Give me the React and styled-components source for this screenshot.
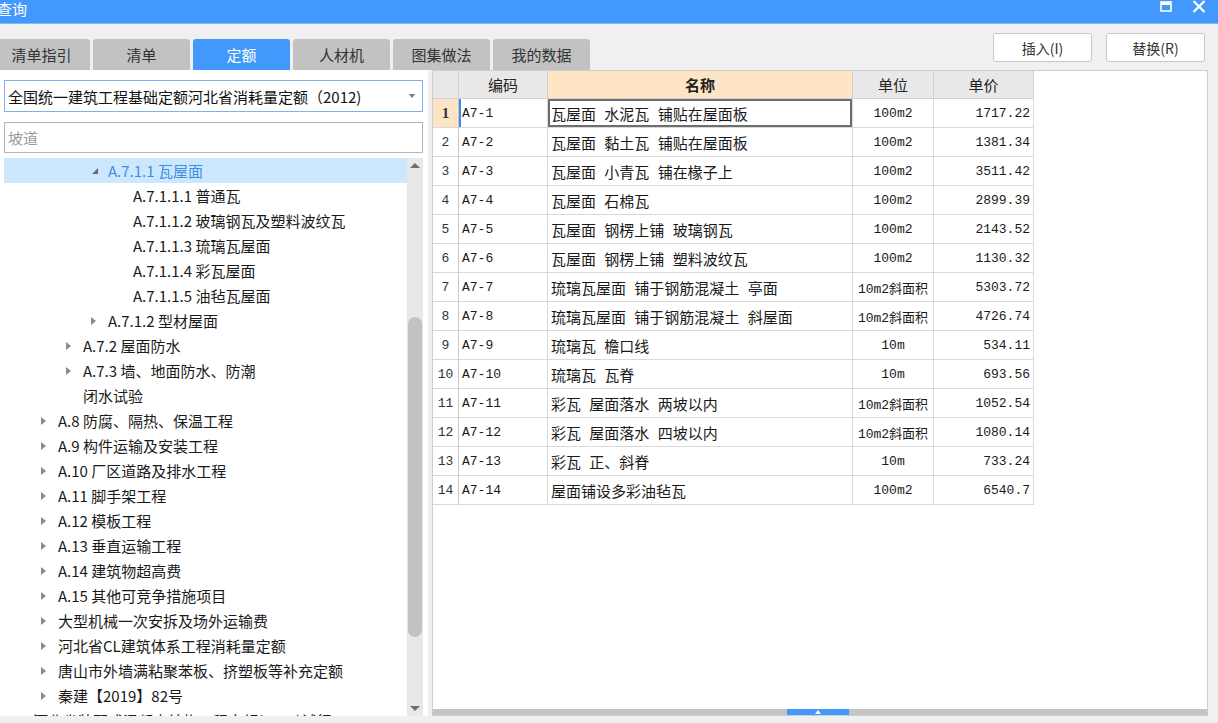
import React from "react";
import styled, { createGlobalStyle } from "styled-components";

const GlobalStyle = createGlobalStyle`
  html, body { margin: 0; padding: 0; background: #f0f0f0; }
  body { font-family: "Noto Sans CJK SC", "Noto Sans", sans-serif; }
  * { box-sizing: border-box; }
`;

const CJK = `"Noto Sans CJK SC", "Noto Sans", sans-serif`;
const MONO = `"Liberation Mono", "Noto Sans CJK SC", monospace`;

const Window = styled.div`
  width: 1218px;
  height: 723px;
  background: #f0f0f0;
  display: flex;
  flex-direction: column;
  overflow: hidden;
`;

const TitleBar = styled.div`
  height: 24px;
  background: #4398fc;
  display: flex;
  align-items: center;
  justify-content: space-between;
  border-bottom: 1px solid #7fb6f5;
`;

const Title = styled.span`
  color: #fff;
  font-size: 15px;
  margin-left: -3px;
  margin-top: -6px;
  font-family: ${CJK};
`;

const WinIcons = styled.div`
  display: flex;
  align-items: center;
  gap: 20px;
  margin-right: 12px;
  margin-top: -10px;
`;

const TopBar = styled.div`
  height: 46px;
  display: flex;
  align-items: flex-end;
  justify-content: space-between;
`;

const Tabs = styled.div`
  display: flex;
  gap: 3px;
  margin-left: -7px;
`;

const Tab = styled.div`
  width: 97px;
  height: 31px;
  border-radius: 3px 3px 0 0;
  background: ${(p) => (p.$active ? "#4398fc" : "#c2c2c2")};
  color: ${(p) => (p.$active ? "#fff" : "#333")};
  font-size: 15px;
  display: flex;
  align-items: center;
  justify-content: center;
`;

const Buttons = styled.div`
  display: flex;
  gap: 14px;
  margin-right: 13px;
  align-self: flex-start;
  margin-top: 9px;
`;

const Button = styled.div`
  width: 99px;
  height: 29px;
  background: #fff;
  border: 1px solid #c8c8c8;
  border-radius: 3px;
  font-size: 14px;
  color: #333;
  display: flex;
  align-items: center;
  justify-content: center;
`;

const Main = styled.div`
  height: 646px;
  display: flex;
  gap: 4px;
  padding-right: 10px;
`;

const LeftPanel = styled.div`
  width: 428px;
  background: #fff;
  display: flex;
  flex-direction: column;
  padding: 10px 5px 0 4px;
`;

const Combo = styled.div`
  height: 32px;
  border: 1px solid #7db2ee;
  display: flex;
  align-items: center;
  justify-content: space-between;
  padding: 0 7px 0 3px;
  font-size: 15px;
  color: #111;
`;

const Caret = styled.span`
  width: 0;
  height: 0;
  border-left: 3.5px solid transparent;
  border-right: 3.5px solid transparent;
  border-top: 4px solid #777;
`;

const Search = styled.div`
  margin-top: 10px;
  height: 31px;
  border: 1px solid #b4b4b4;
  display: flex;
  align-items: center;
  padding-left: 3px;
  font-size: 15px;
  color: #999;
`;

const TreeWrap = styled.div`
  margin-top: 5px;
  flex: 1;
  display: flex;
  overflow: hidden;
`;

const TreeList = styled.div`
  flex: 1;
  overflow: hidden;
`;

const TreeRow = styled.div`
  height: 25px;
  display: flex;
  align-items: center;
  padding-left: ${(p) => 9 + p.$level * 25}px;
  background: ${(p) => (p.$selected ? "#cce8ff" : "transparent")};
  color: ${(p) => (p.$selected ? "#3d8fe3" : "#1a1a1a")};
  font-size: 15px;
  white-space: nowrap;
`;

const Toggle = styled.span`
  width: 20px;
  flex: none;
  display: flex;
  align-items: center;
  padding-left: 3px;
`;

const Collapsed = styled.span`
  width: 0;
  height: 0;
  border-top: 4px solid transparent;
  border-bottom: 4px solid transparent;
  border-left: 5px solid #8a8a8a;
`;

const Expanded = styled.span`
  width: 0;
  height: 0;
  border-left: 6px solid transparent;
  border-bottom: 6px solid #6b6b6b;
  margin-left: 1px;
`;

const VScroll = styled.div`
  width: 16px;
  background: #e8e8e8;
  display: flex;
  flex-direction: column;
  align-items: center;
  justify-content: space-between;
  padding: 5px 0 5px;
  position: relative;
`;

const ArrowUp = styled.span`
  width: 0;
  height: 0;
  border-left: 5px solid transparent;
  border-right: 5px solid transparent;
  border-bottom: 5px solid #6e6e6e;
`;

const ArrowDown = styled.span`
  width: 0;
  height: 0;
  border-left: 5px solid transparent;
  border-right: 5px solid transparent;
  border-top: 5px solid #6e6e6e;
`;

const Thumb = styled.div`
  position: absolute;
  left: 1px;
  right: 1px;
  top: 159px;
  height: 320px;
  background: #c2c2c2;
  border-radius: 7px;
`;

const RightPanel = styled.div`
  flex: 1;
  background: #fff;
  border: 1px solid #cdcdcd;
  display: flex;
  flex-direction: column;
`;

const Grid = styled.div`
  flex: 1;
  overflow: hidden;
`;

const Row = styled.div`
  display: grid;
  grid-template-columns: 26px 89px 305px 81px 100px;
  height: ${(p) => (p.$header ? 28 : 29)}px;
`;

const Cell = styled.div`
  border-right: 1px solid #d9d9d9;
  border-bottom: 1px solid #d9d9d9;
  display: flex;
  align-items: center;
  justify-content: ${(p) => p.$align || "flex-start"};
  padding: 0 3px;
  font-family: ${(p) => (p.$mono ? MONO : CJK)};
  font-size: ${(p) => (p.$mono ? "13px" : "15px")};
  color: #1a1a1a;
  white-space: nowrap;
  overflow: hidden;
  background: #fff;
`;

const HeadCell = styled(Cell)`
  background: ${(p) => (p.$active ? "#fde4c4" : "#e8e8e8")};
  font-weight: ${(p) => (p.$active ? 700 : 400)};
  justify-content: center;
  color: #222;
  border-color: #d0d0d0;
`;

const NumCell = styled(Cell)`
  justify-content: center;
  padding: 0;
  background: ${(p) => (p.$active ? "#fde4c4" : "#fff")};
  font-family: ${(p) => (p.$active ? `"Liberation Serif", serif` : MONO)};
  font-weight: ${(p) => (p.$active ? 700 : 400)};
  font-size: ${(p) => (p.$active ? "15px" : "13px")};
  color: #333;
  border-right-color: #c8c8c8;
`;

const CodeCell = styled(Cell)`
  box-shadow: ${(p) => (p.$cursor ? "inset 2px 0 0 #3a8ee8" : "none")};
`;

const NameCell = styled(Cell)`
  word-spacing: 5px;
  box-shadow: ${(p) => (p.$focus ? "inset 0 0 0 2px #6e6e6e" : "none")};
`;

const HBar = styled.div`
  height: 6px;
  background: #c4c4c4;
  display: flex;
  justify-content: center;
  padding-right: 4px;
`;

const HHandle = styled.div`
  width: 62px;
  height: 6px;
  background: #4398fc;
  display: flex;
  align-items: center;
  justify-content: center;
`;

const HTri = styled.span`
  width: 0;
  height: 0;
  border-left: 3px solid transparent;
  border-right: 3px solid transparent;
  border-bottom: 4px solid #fff;
`;

const tree = [
  { l: 3, t: "A.7.1.1 瓦屋面", s: "open", sel: true },
  { l: 4, t: "A.7.1.1.1 普通瓦" },
  { l: 4, t: "A.7.1.1.2 玻璃钢瓦及塑料波纹瓦" },
  { l: 4, t: "A.7.1.1.3 琉璃瓦屋面" },
  { l: 4, t: "A.7.1.1.4 彩瓦屋面" },
  { l: 4, t: "A.7.1.1.5 油毡瓦屋面" },
  { l: 3, t: "A.7.1.2 型材屋面", s: "closed" },
  { l: 2, t: "A.7.2 屋面防水", s: "closed" },
  { l: 2, t: "A.7.3 墙、地面防水、防潮", s: "closed" },
  { l: 2, t: "闭水试验" },
  { l: 1, t: "A.8 防腐、隔热、保温工程", s: "closed" },
  { l: 1, t: "A.9 构件运输及安装工程", s: "closed" },
  { l: 1, t: "A.10 厂区道路及排水工程", s: "closed" },
  { l: 1, t: "A.11 脚手架工程", s: "closed" },
  { l: 1, t: "A.12 模板工程", s: "closed" },
  { l: 1, t: "A.13 垂直运输工程", s: "closed" },
  { l: 1, t: "A.14 建筑物超高费", s: "closed" },
  { l: 1, t: "A.15 其他可竞争措施项目", s: "closed" },
  { l: 1, t: "大型机械一次安拆及场外运输费", s: "closed" },
  { l: 1, t: "河北省CL建筑体系工程消耗量定额", s: "closed" },
  { l: 1, t: "唐山市外墙满粘聚苯板、挤塑板等补充定额", s: "closed" },
  { l: 1, t: "秦建【2019】82号", s: "closed" },
  { l: 0, t: "河北省装配式混凝土结构工程定额(2016)试行" },
];

const rows = [
  ["A7-1", "瓦屋面 水泥瓦 铺贴在屋面板", "100m2", "1717.22"],
  ["A7-2", "瓦屋面 黏土瓦 铺贴在屋面板", "100m2", "1381.34"],
  ["A7-3", "瓦屋面 小青瓦 铺在椽子上", "100m2", "3511.42"],
  ["A7-4", "瓦屋面 石棉瓦", "100m2", "2899.39"],
  ["A7-5", "瓦屋面 钢楞上铺 玻璃钢瓦", "100m2", "2143.52"],
  ["A7-6", "瓦屋面 钢楞上铺 塑料波纹瓦", "100m2", "1130.32"],
  ["A7-7", "琉璃瓦屋面 铺于钢筋混凝土 亭面", "10m2斜面积", "5303.72"],
  ["A7-8", "琉璃瓦屋面 铺于钢筋混凝土 斜屋面", "10m2斜面积", "4726.74"],
  ["A7-9", "琉璃瓦 檐口线", "10m", "534.11"],
  ["A7-10", "琉璃瓦 瓦脊", "10m", "693.56"],
  ["A7-11", "彩瓦 屋面落水 两坡以内", "10m2斜面积", "1052.54"],
  ["A7-12", "彩瓦 屋面落水 四坡以内", "10m2斜面积", "1080.14"],
  ["A7-13", "彩瓦 正、斜脊", "10m", "733.24"],
  ["A7-14", "屋面铺设多彩油毡瓦", "100m2", "6540.7"],
];

const tabs = ["清单指引", "清单", "定额", "人材机", "图集做法", "我的数据"];

export default function App() {
  return (
    <>
      <GlobalStyle />
      <Window>
        <TitleBar>
          <Title>查询</Title>
          <WinIcons>
            <svg width="12" height="11" viewBox="0 0 12 11">
              <rect x="1" y="1" width="10" height="9" fill="none" stroke="#fff" strokeWidth="1.6" />
              <rect x="1" y="1" width="10" height="3" fill="#fff" />
            </svg>
            <svg width="14" height="13" viewBox="0 0 14 13">
              <path d="M1.5 1 L12.5 12 M12.5 1 L1.5 12" stroke="#fff" strokeWidth="2.2" />
            </svg>
          </WinIcons>
        </TitleBar>
        <TopBar>
          <Tabs>
            {tabs.map((t) => (
              <Tab key={t} $active={t === "定额"}>
                {t}
              </Tab>
            ))}
          </Tabs>
          <Buttons>
            <Button>插入(I)</Button>
            <Button>替换(R)</Button>
          </Buttons>
        </TopBar>
        <Main>
          <LeftPanel>
            <Combo>
              <span>全国统一建筑工程基础定额河北省消耗量定额（2012)</span>
              <Caret />
            </Combo>
            <Search>坡道</Search>
            <TreeWrap>
              <TreeList>
                {tree.map((n, i) => (
                  <TreeRow key={i} $level={n.l} $selected={n.sel}>
                    <Toggle>
                      {n.s === "open" && <Expanded />}
                      {n.s === "closed" && <Collapsed />}
                    </Toggle>
                    {n.t}
                  </TreeRow>
                ))}
              </TreeList>
              <VScroll>
                <ArrowUp />
                <Thumb />
                <ArrowDown />
              </VScroll>
            </TreeWrap>
          </LeftPanel>
          <RightPanel>
            <Grid>
              <Row $header>
                <HeadCell />
                <HeadCell>编码</HeadCell>
                <HeadCell $active>名称</HeadCell>
                <HeadCell>单位</HeadCell>
                <HeadCell>单价</HeadCell>
              </Row>
              {rows.map((r, i) => (
                <Row key={i}>
                  <NumCell $active={i === 0}>{i + 1}</NumCell>
                  <CodeCell $mono $cursor={i === 0}>{r[0]}</CodeCell>
                  <NameCell $focus={i === 0}>{r[1]}</NameCell>
                  <Cell $mono $align="center">{r[2]}</Cell>
                  <Cell $mono $align="flex-end">{r[3]}</Cell>
                </Row>
              ))}
            </Grid>
            <HBar>
              <HHandle>
                <HTri />
              </HHandle>
            </HBar>
          </RightPanel>
        </Main>
      </Window>
    </>
  );
}
